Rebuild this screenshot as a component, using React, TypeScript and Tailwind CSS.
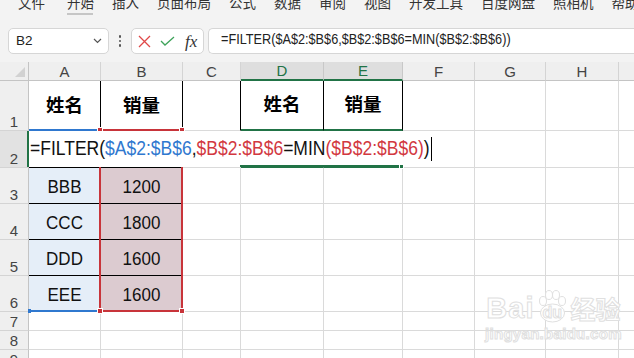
import { Fragment } from 'react';

// Column widths include the 1px right grid line
const COLS = [
  { key: 'A', w: 'w-[72px]' },
  { key: 'B', w: 'w-[82px]' },
  { key: 'C', w: 'w-[58px]' },
  { key: 'D', w: 'w-[83px]' },
  { key: 'E', w: 'w-[79px]' },
  { key: 'F', w: 'w-[72px]' },
  { key: 'G', w: 'w-[71px]' },
  { key: 'H', w: 'w-[73px]' },
  { key: 'I', w: 'w-[60px]' },
];

const MENU = ['开始', '插入', '页面布局', '公式', '数据', '审阅', '视图', '开发工具', '百度网盘', '照相机', '帮助'];

const DATA = [
  { name: 'BBB', qty: '1200' },
  { name: 'CCC', qty: '1800' },
  { name: 'DDD', qty: '1600' },
  { name: 'EEE', qty: '1600' },
];

function RowHead({ n, h, active = false }: { n: number; h: string; active?: boolean }) {
  return (
    <div
      className={`${h} w-[29px] shrink-0 border-r border-b border-r-[#c4c4c4] border-b-[#d4d4d4] flex items-end justify-center pb-[1px] text-[15px] leading-none text-[#444] ${
        active ? 'bg-[#e2e2e2]' : 'bg-[#efefef]'
      }`}
    >
      {n}
    </div>
  );
}

function Cell({ w, h, className = '', children }: { w: string; h: string; className?: string; children?: React.ReactNode }) {
  return (
    <div className={`${w} ${h} shrink-0 border-r border-b border-[#dadada] flex items-center justify-center ${className}`}>
      {children}
    </div>
  );
}

function FormulaText() {
  return (
    <span className="inline-block scale-y-[1.2]">
      <span>=FILTER(</span>
      <span className="text-[#2f78cf]">$A$2:$B$6</span>
      <span>,</span>
      <span className="text-[#d2383f]">$B$2:$B$6</span>
      <span>=MIN</span>
      <span className="text-[#d2383f]">($B$2:$B$6)</span>
      <span>)</span>
    </span>
  );
}

export default function App() {
  const font = "font-['Liberation_Sans','Noto_Sans_CJK_SC',sans-serif]";

  return (
    <div className={`w-[634px] h-[358px] overflow-hidden bg-white relative ${font}`}>
      {/* Top chrome */}
      <div className="h-[62px] bg-[#f3f3f3] flex flex-col">
        {/* Ribbon tabs (clipped) */}
        <div className="h-[16px] overflow-hidden relative">
          <div className="flex items-start pl-[18px] mt-[-3px] text-[13.5px] leading-none text-[#333] whitespace-nowrap">
            <span className="mr-[22px]">文件</span>
            {MENU.map((m) => (
              <span key={m} className="mr-[18px]">
                {m}
              </span>
            ))}
          </div>
          <div className="absolute left-[67px] top-[13px] w-[26px] h-[2px] bg-[#c6c6c6]" />
        </div>

        {/* Formula bar */}
        <div className="mt-[12px] h-[26px] flex items-stretch">
          <div className="ml-[8px] w-[101px] bg-white border border-[#d6d6d6] rounded-[5px] flex items-center pl-[7px] pr-[6px] text-[13.5px] text-[#222]">
            <span className="flex-1">B2</span>
            <svg width="9" height="6" viewBox="0 0 9 6" fill="none">
              <path d="M1 1l3.5 3.5L8 1" stroke="#555" strokeWidth="1.2" />
            </svg>
          </div>
          <div className="w-[22px] flex flex-col items-center justify-center gap-[2px]">
            <span className="w-[2.5px] h-[2.5px] rounded-full bg-[#555]" />
            <span className="w-[2.5px] h-[2.5px] rounded-full bg-[#555]" />
            <span className="w-[2.5px] h-[2.5px] rounded-full bg-[#555]" />
          </div>
          <div className="w-[73px] bg-white border border-[#d6d6d6] rounded-[5px] flex items-center pl-[6px] gap-[9px]">
            <svg width="13" height="13" viewBox="0 0 13 13" fill="none">
              <path d="M1 1l11 11M12 1L1 12" stroke="#e04848" strokeWidth="1.3" />
            </svg>
            <svg width="15" height="10" viewBox="0 0 15 10" fill="none">
              <path d="M1 5l4 4 9-8" stroke="#3ea35a" strokeWidth="1.3" />
            </svg>
            <span className="font-['Liberation_Serif',serif] italic text-[17px] leading-none text-[#333] ml-[1px]">fx</span>
          </div>
          <div className="ml-[4px] flex-1 bg-white border border-r-0 border-[#d6d6d6] rounded-l-[5px] flex items-center pl-[12px] text-[12.7px] text-[#222] whitespace-nowrap">
            <span className="inline-block scale-y-[1.1]">=FILTER($A$2:$B$6,$B$2:$B$6=MIN($B$2:$B$6))</span>
          </div>
        </div>
      </div>

      {/* Sheet */}
      <div className="flex flex-col">
        {/* Column header */}
        <div className="flex h-[19px]">
          <div className="w-[29px] shrink-0 border-r border-b border-r-[#c4c4c4] border-b-[#c4c4c4] bg-[#efefef] relative">
            <svg className="absolute left-[15px] top-[5px]" width="10" height="10" viewBox="0 0 10 10">
              <path d="M10 0V10H0z" fill="#d2d2d2" />
            </svg>
          </div>
          {COLS.map((c) => {
            const sel = c.key === 'D' || c.key === 'E';
            return (
              <div
                key={c.key}
                className={`${c.w} shrink-0 border-r border-b flex items-center justify-center text-[15px] leading-none ${
                  sel
                    ? 'bg-[#dedede] text-[#217346] border-r-[#c8c8c8] border-b-2 border-b-[#217346]'
                    : 'bg-[#efefef] text-[#444] border-r-[#d4d4d4] border-b-[#c4c4c4]'
                }`}
              >
                {c.key}
              </div>
            );
          })}
        </div>

        {/* Row 1 */}
        <div className="flex">
          <RowHead n={1} h="h-[50px]" />
          {COLS.map((c) => {
            const text = c.key === 'A' || c.key === 'D' ? '姓名' : c.key === 'B' || c.key === 'E' ? '销量' : '';
            const black = ['A', 'B', 'C', 'D', 'E'].includes(c.key);
            return (
              <Cell
                key={c.key}
                w={c.w}
                h="h-[50px]"
                className={`text-[18.5px] font-bold text-black ${black ? 'border-r-black' : ''} ${
                  c.key === 'D' || c.key === 'E' ? 'border-b-[#217346] border-b-2' : ''
                }`}
              >
                {text}
              </Cell>
            );
          })}
        </div>

        {/* Row 2 */}
        <div className="flex">
          <RowHead n={2} h="h-[37px]" active />
          {COLS.map((c) => (
            <Cell
              key={c.key}
              w={c.w}
              h="h-[37px]"
              className={c.key === 'A' || c.key === 'B' ? 'border-b-black' : c.key === 'D' || c.key === 'E' ? 'border-b-[#217346] border-b-2' : ''}
            />
          ))}
        </div>

        {/* Rows 3-6 */}
        {DATA.map((d, i) => (
          <div key={d.name} className="flex">
            <RowHead n={i + 3} h="h-[36px]" />
            {COLS.map((c) => (
              <Fragment key={c.key}>
                {c.key === 'A' ? (
                  <Cell w={c.w} h="h-[36px]" className="bg-[#e5eef8] border-r-black border-b-black text-[17px] text-[#111] pt-[3px]">
                    <span className="inline-block scale-y-[1.1]">{d.name}</span>
                  </Cell>
                ) : c.key === 'B' ? (
                  <Cell w={c.w} h="h-[36px]" className="bg-[#dccbd0] border-r-black border-b-black text-[17px] text-[#111] pt-[3px]">
                    <span className="inline-block scale-y-[1.1]">{d.qty}</span>
                  </Cell>
                ) : (
                  <Cell w={c.w} h="h-[36px]" />
                )}
              </Fragment>
            ))}
          </div>
        ))}

        {/* Rows 7-9 */}
        {[7, 8, 9].map((n) => (
          <div key={n} className="flex">
            <RowHead n={n} h="h-[19px]" />
            {COLS.map((c) => (
              <Cell key={c.key} w={c.w} h="h-[19px]" />
            ))}
          </div>
        ))}
      </div>

      {/* Reference highlight: $A$2:$B$6 (blue) */}
      <div className="absolute left-[29px] top-[129px] w-[71px] h-[2px] bg-[#2f78cf]" />
      <div className="absolute left-[29px] top-[310px] w-[71px] h-[2px] bg-[#2f78cf]" />
      <div className="absolute left-[28px] top-[309px] w-[3px] h-[4px] bg-[#2f78cf]" />

      {/* Reference highlight: $B$2:$B$6 (red) */}
      <div className="absolute left-[100px] top-[129px] w-[83px] h-[2px] bg-[#c8343a]" />
      <div className="absolute left-[100px] top-[310px] w-[83px] h-[2px] bg-[#c8343a]" />
      <div className="absolute left-[99px] top-[167px] w-[2px] h-[144px] bg-[#c8343a]" />
      <div className="absolute left-[181px] top-[167px] w-[2px] h-[144px] bg-[#c8343a]" />
      {[
        'left-[97px] top-[127px]',
        'left-[179px] top-[127px]',
        'left-[97px] top-[308px]',
        'left-[179px] top-[308px]',
      ].map((p) => (
        <div key={p} className={`absolute ${p} w-[6px] h-[6px] bg-[#c8343a] border border-white`} />
      ))}

      {/* In-cell editor */}
      <div className="absolute left-[27px] top-[131px] w-[446px] h-[36px] bg-white border-l-2 border-[#217346] flex items-center pl-[1px] text-[17.5px] leading-none text-[#111] whitespace-nowrap">
        <FormulaText />
        <span className="ml-[1px] w-[1px] h-[24px] bg-black" />
      </div>
      <div className="absolute left-[240px] top-[165px] w-[161px] h-[2px] bg-[#217346]" />
      <div className="absolute left-[399px] top-[164px] w-[5px] h-[5px] bg-[#217346] border border-white" />

      {/* Watermark */}
      <div className="absolute left-[485px] top-[289px] flex flex-col items-center text-white [-webkit-text-stroke:1px_#e0e0e0]">
        <div className="flex items-end leading-none">
          <span className="text-[29px] font-bold tracking-[1px]">Bai</span>
          <span className="relative w-[34px] h-[34px] mx-[1px]">
            <svg className="absolute inset-0" width="34" height="34" viewBox="0 0 34 34" fill="white" stroke="#e0e0e0">
              <ellipse cx="8" cy="12" rx="3.5" ry="4.5" />
              <ellipse cx="14" cy="6" rx="3.5" ry="4.5" />
              <ellipse cx="21" cy="6" rx="3.5" ry="4.5" />
              <ellipse cx="27" cy="12" rx="3.5" ry="4.5" />
              <ellipse cx="17.5" cy="24" rx="12" ry="9" />
            </svg>
            <span className="absolute left-[7px] top-[16px] text-[16px] font-bold">du</span>
          </span>
          <span className="text-[25px] font-bold">经验</span>
        </div>
        <span className="mt-[3px] text-[15px] font-bold leading-none tracking-[0.3px]">jingyan.baidu.com</span>
      </div>
    </div>
  );
}
